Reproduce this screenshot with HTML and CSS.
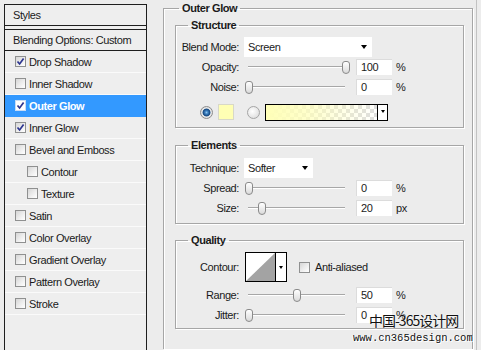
FILE: index.html
```html
<!DOCTYPE html>
<html>
<head>
<meta charset="utf-8">
<link rel="stylesheet" href="styles.css">
</head>
<body>
<div class="dialog">
  <div class="styles-panel">
    <div class="sp-head">Styles</div>
    <div class="sp-blend">Blending Options: Custom</div>
    <ul class="sp-list">
      <li class="sp-item"><span class="cb"><svg viewBox="0 0 11 11" width="11" height="11"><path d="M2.5 5.5 L4.6 8 L8.6 2.6" fill="none" stroke="#2d3590" stroke-width="1.7"/></svg></span>Drop Shadow</li>
      <li class="sp-item"><span class="cb"></span>Inner Shadow</li>
      <li class="sp-item active"><span class="cb"><svg viewBox="0 0 11 11" width="11" height="11"><path d="M2.5 5.5 L4.6 8 L8.6 2.6" fill="none" stroke="#2d3590" stroke-width="1.7"/></svg></span>Outer Glow</li>
      <li class="sp-item"><span class="cb"><svg viewBox="0 0 11 11" width="11" height="11"><path d="M2.5 5.5 L4.6 8 L8.6 2.6" fill="none" stroke="#2d3590" stroke-width="1.7"/></svg></span>Inner Glow</li>
      <li class="sp-item"><span class="cb"></span>Bevel and Emboss</li>
      <li class="sp-item sub"><span class="cb"></span>Contour</li>
      <li class="sp-item sub"><span class="cb"></span>Texture</li>
      <li class="sp-item"><span class="cb"></span>Satin</li>
      <li class="sp-item"><span class="cb"></span>Color Overlay</li>
      <li class="sp-item"><span class="cb"></span>Gradient Overlay</li>
      <li class="sp-item"><span class="cb"></span>Pattern Overlay</li>
      <li class="sp-item"><span class="cb"></span>Stroke</li>
    </ul>
  </div>

  <div class="main">
    <fieldset class="group outer">
      <legend>Outer Glow</legend>

      <fieldset class="group inner structure">
        <legend>Structure</legend>
        <div class="row">
          <span class="lbl">Blend Mode:</span>
          <div class="select blend">Screen<span class="arrow"></span></div>
        </div>
        <div class="row">
          <span class="lbl">Opacity:</span>
          <div class="slider"><span class="track"></span><span class="thumb" style="left:98px"></span></div>
          <div class="num">100</div><span class="unit">%</span>
        </div>
        <div class="row">
          <span class="lbl">Noise:</span>
          <div class="slider"><span class="track"></span><span class="thumb" style="left:1px"></span></div>
          <div class="num">0</div><span class="unit">%</span>
        </div>
        <div class="color-row">
          <span class="radio on"></span>
          <span class="swatch"></span>
          <span class="radio"></span>
          <div class="gradient"><span class="grad-fill"></span><span class="grad-drop"><span class="arrow small"></span></span></div>
        </div>
      </fieldset>

      <fieldset class="group inner elements">
        <legend>Elements</legend>
        <div class="row">
          <span class="lbl">Technique:</span>
          <div class="select technique">Softer<span class="arrow"></span></div>
        </div>
        <div class="row">
          <span class="lbl">Spread:</span>
          <div class="slider"><span class="track"></span><span class="thumb" style="left:1px"></span></div>
          <div class="num">0</div><span class="unit">%</span>
        </div>
        <div class="row">
          <span class="lbl">Size:</span>
          <div class="slider"><span class="track"></span><span class="thumb" style="left:14px"></span></div>
          <div class="num">20</div><span class="unit">px</span>
        </div>
      </fieldset>

      <fieldset class="group inner quality">
        <legend>Quality</legend>
        <div class="row contour-row">
          <span class="lbl">Contour:</span>
          <div class="contour">
            <span class="contour-curve"><svg viewBox="0 0 29 28" width="29" height="28" preserveAspectRatio="none"><polygon points="0,28 29,0 29,28" fill="#a3a3a3"/></svg></span>
            <span class="contour-drop"><span class="arrow small"></span></span>
          </div>
          <span class="cb aa"></span><span class="aa-text">Anti-aliased</span>
        </div>
        <div class="row range-row">
          <span class="lbl">Range:</span>
          <div class="slider"><span class="track"></span><span class="thumb" style="left:49px"></span></div>
          <div class="num">50</div><span class="unit">%</span>
        </div>
        <div class="row">
          <span class="lbl">Jitter:</span>
          <div class="slider"><span class="track"></span><span class="thumb" style="left:1px"></span></div>
          <div class="num">0</div><span class="unit">%</span>
        </div>
      </fieldset>
    </fieldset>
  </div>
</div>
<div class="watermark">
  <div class="wm-cn">中国-365设计网</div>
  <div class="wm-url">www.cn365design.com</div>
</div>
</body>
</html>
```
FILE: styles.css
```css
* { box-sizing: border-box; }
html, body {
  margin: 0;
  padding: 0;
  width: 481px;
  height: 350px;
  overflow: hidden;
  background: #ececec;
}
body {
  font-family: "Liberation Sans", Arial, sans-serif;
  font-size: 11px;
  letter-spacing: -0.4px;
  color: #1a1a1a;
  position: relative;
}
.dialog {
  display: flex;
  align-items: flex-start;
  height: 350px;
}

/* ---------- left styles list ---------- */
.styles-panel {
  margin: 4px 0 0 4px;
  width: 143px;
  height: 346px;
  border: 1px solid #1e1e1e;
  border-bottom: 0;
  background: #eeeeee;
  flex-shrink: 0;
}
.sp-head {
  height: 21px;
  line-height: 20px;
  padding-left: 8px;
  border-bottom: 1px solid #1e1e1e;
}
.sp-blend {
  margin-top: 3px;
  height: 22px;
  line-height: 20px;
  padding-left: 8px;
  border-top: 1px solid #1e1e1e;
  border-bottom: 1px solid #1e1e1e;
}
.sp-list {
  list-style: none;
  margin: 0;
  padding: 0;
}
.sp-item {
  height: 22px;
  display: flex;
  align-items: center;
  padding-left: 10px;
  border-bottom: 1px solid #fafafa;
}
.sp-item.sub { padding-left: 22px; }
.sp-item .cb { margin-right: 3px; }
.sp-item.active {
  background: #3399ff;
  color: #fff;
  font-weight: bold;
  border-bottom-color: #3399ff;
}
.sp-item.active .cb {
  border-color: #c8dcf5;
  background: #fff;
}

.cb {
  display: inline-block;
  flex-shrink: 0;
  width: 11px;
  height: 11px;
  border: 1px solid #8f9090;
  background: linear-gradient(135deg, #d6d6d6 0%, #f4f4f4 70%, #fff 100%);
  position: relative;
}
.cb svg {
  display: block;
  margin: -1px 0 0 -1px;
}

/* ---------- right panel ---------- */
.main {
  margin-left: 16px;
  padding-top: 2px;
  padding-right: 3px;
  width: 314px;
  height: 350px;
  border-right: 1px solid #c2c2c2;
}
.group {
  margin: 0;
  padding: 0;
  min-width: 0;
  border: 1px solid #a6a6a6;
  box-shadow: inset 1px 1px 0 #fff, 1px 1px 0 #fff;
}
.group > legend {
  font-weight: bold;
  line-height: 13px;
  padding: 0 3px;
}
.outer {
  width: 310px;
  padding-bottom: 20px;
  border-bottom: 0;
}
.outer > legend { margin-left: 15px; }
.inner {
  margin: 0 8px 0 11px;
}
.inner > legend { margin-left: 12px; }
.structure { margin-top: 4px; padding-top: 5px; padding-bottom: 7px; }
.elements { margin-top: 11px; padding-top: 6px; padding-bottom: 5px; }
.quality { margin-top: 10px; padding-top: 5px; padding-bottom: 3px; }

.row {
  display: flex;
  align-items: center;
  height: 20px;
}
.lbl {
  width: 63px;
  text-align: right;
  margin-right: 5px;
  flex-shrink: 0;
}

.select {
  height: 20px;
  background: #fff;
  display: flex;
  align-items: center;
  padding-left: 4px;
}
.select.blend { width: 128px; }
.select.technique { width: 69px; }
.select .arrow { margin-left: auto; margin-right: 5px; }

.arrow {
  display: inline-block;
  width: 0;
  height: 0;
  border-left: 3.5px solid transparent;
  border-right: 3.5px solid transparent;
  border-top: 4px solid #000;
}
.arrow.small {
  border-left-width: 2.5px;
  border-right-width: 2.5px;
  border-top-width: 3px;
}

.slider {
  position: relative;
  width: 105px;
  height: 20px;
  margin-right: 7px;
  flex-shrink: 0;
}
.track {
  position: absolute;
  left: 4px;
  right: 4px;
  top: 9px;
  height: 2px;
  border-top: 1px solid #a7a7a7;
  border-bottom: 1px solid #fff;
}
.thumb {
  position: absolute;
  top: 4px;
  width: 8px;
  height: 13px;
  border: 1px solid #8a8a8a;
  border-radius: 3px 3px 4px 4px;
  background: linear-gradient(#ffffff, #dadada);
}

.num {
  width: 36px;
  height: 16px;
  background: #fff;
  border-top: 1px solid #dcdcdc;
  border-left: 1px solid #dcdcdc;
  padding-left: 4px;
  line-height: 14px;
  flex-shrink: 0;
}
.unit { margin-left: 4px; }

.color-row {
  display: flex;
  align-items: center;
  margin-top: 7px;
  height: 16px;
  padding-left: 24px;
}
.radio {
  width: 13px;
  height: 13px;
  border-radius: 50%;
  border: 1px solid #a5a5a5;
  background: radial-gradient(circle at 40% 40%, #ffffff, #d6d6d6);
  flex-shrink: 0;
}
.radio.on {
  border-color: #8d8d8d;
  background: radial-gradient(circle at 50% 50%, #8ec3ec 0, #3a7fc0 1.6px, #1d4f86 3.2px, #2c5d92 3.7px, #e9e9e9 4.3px, #cfcfcf 100%);
}
.swatch {
  width: 16px;
  height: 16px;
  margin-left: 5px;
  margin-right: 13px;
  background: #ffffb4;
  border: 1px solid #d8d8c8;
}
.gradient {
  margin-left: 5px;
  width: 123px;
  height: 17px;
  border: 1px solid #000;
  display: flex;
}
.grad-fill {
  flex: 1;
  background:
    linear-gradient(to right, #ffffb8 0%, rgba(255,255,184,0.75) 35%, rgba(255,255,184,0) 100%),
    repeating-conic-gradient(#dedede 0 25%, #ffffff 0 50%) 0 0 / 8px 8px;
}
.grad-drop {
  width: 10px;
  border-left: 1px solid #000;
  background: #fff;
  display: flex;
  justify-content: center;
  padding-top: 5px;
}

.contour-row { height: 30px; }
.contour {
  margin-left: 1px;
  width: 42px;
  height: 30px;
  border: 1px solid #000;
  display: flex;
  flex-shrink: 0;
}
.contour-curve {
  flex: 1;
  background: #fff;
}
.contour-curve svg { display: block; width: 100%; height: 100%; }
.contour-drop {
  width: 11px;
  border-left: 1px solid #000;
  background: #fff;
  display: flex;
  justify-content: center;
  align-items: center;
}
.cb.aa { margin-left: 12px; }
.aa-text { margin-left: 5px; }
.range-row { margin-top: 3px; }

/* ---------- watermark ---------- */
.watermark {
  position: absolute;
  left: 353px;
  top: 312px;
  color: #111;
  letter-spacing: 0;
}
.wm-cn {
  margin-left: 16px;
  font-family: "Noto Sans CJK SC", sans-serif;
  font-size: 14px;
  line-height: 16px;
  letter-spacing: -1px;
  text-shadow: 0 0 2px #fff;
}
.wm-url {
  margin-top: 4px;
  font-family: "Liberation Mono", monospace;
  font-size: 10.5px;
  line-height: 12px;
  text-shadow: 1px 1px 0 #fff, -1px 0 0 #fff;
}
```
